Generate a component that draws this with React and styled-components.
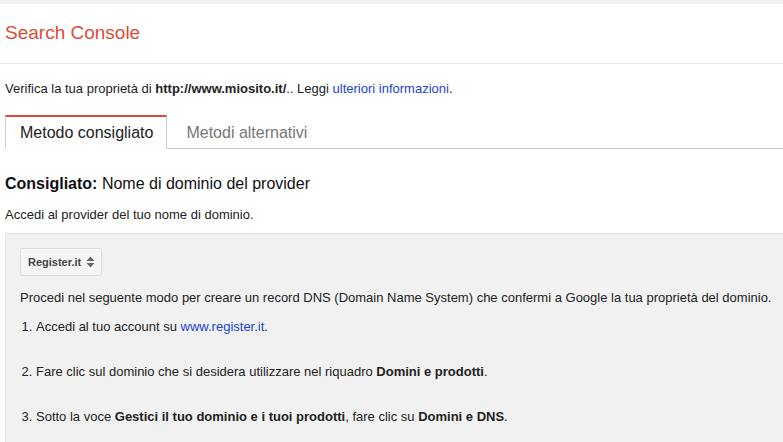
import React from "react";
import styled, { createGlobalStyle } from "styled-components";

const GlobalStyle = createGlobalStyle`
  html, body {
    margin: 0;
    padding: 0;
    background: #fff;
    font-family: "Liberation Sans", Arial, sans-serif;
    color: #222;
    overflow: hidden;
  }
`;

const TABS = ["Metodo consigliato", "Metodi alternativi"];

const Page = () => {
  return (
    <>
      <GlobalStyle />
      <TopStrip />
      <Header>
        <Title>Search Console</Title>
      </Header>
      <Content>
        <Verify>
          Verifica la tua proprietà di <b>http://www.miosito.it/</b>.. Leggi{" "}
          <Link href="#">ulteriori informazioni</Link>.
        </Verify>
        <TabBar>
          {TABS.map((t, i) => (
            <Tab key={t} active={i === 0}>
              {t}
            </Tab>
          ))}
          <TabFill />
        </TabBar>
        <Heading>
          <b>Consigliato:</b> Nome di dominio del provider
        </Heading>
        <Intro>Accedi al provider del tuo nome di dominio.</Intro>
        <Panel>
          <Select>
            Register.it
            <svg width="9" height="12" viewBox="0 0 9 12">
              <path d="M4.5 0.5 L8.5 5 L0.5 5 Z" fill="#666" />
              <path d="M4.5 11.5 L8.5 7 L0.5 7 Z" fill="#666" />
            </svg>
          </Select>
          <PanelText>
            Procedi nel seguente modo per creare un record DNS (Domain Name
            System) che confermi a Google la tua proprietà del dominio.
          </PanelText>
          <Steps>
            <li>
              Accedi al tuo account su <Link href="#">www.register.it</Link>.
            </li>
            <li>
              Fare clic sul dominio che si desidera utilizzare nel riquadro{" "}
              <b>Domini e prodotti</b>.
            </li>
            <li>
              Sotto la voce <b>Gestici il tuo dominio e i tuoi prodotti</b>,
              fare clic su <b>Domini e DNS</b>.
            </li>
          </Steps>
        </Panel>
      </Content>
    </>
  );
};

const TopStrip = styled.div`
  height: 4px;
  background: #f1f1f1;
`;

const Header = styled.div`
  height: 59px;
  display: flex;
  align-items: center;
  padding-left: 5px;
  border-bottom: 1px solid #e5e5e5;
`;

const Title = styled.div`
  color: #dd4b39;
  font-size: 19px;
  margin-top: -1px;
`;

const Content = styled.div`
  padding-left: 5px;
`;

const Verify = styled.div`
  font-size: 13px;
  line-height: 16px;
  margin-top: 17px;
`;

const Link = styled.a`
  color: #1a43d6;
  text-decoration: none;
`;

const TabBar = styled.div`
  display: flex;
  margin-top: 18px;
  height: 34px;
`;

const Tab = styled.div`
  box-sizing: border-box;
  display: flex;
  align-items: center;
  font-size: 16px;
  height: 34px;
  color: ${({ active }) => (active ? "#222" : "#777")};
  border-top: ${({ active }) => (active ? "2px solid #dd4b39" : "2px solid transparent")};
  border-left: ${({ active }) => (active ? "1px solid #ccc" : "none")};
  border-right: ${({ active }) => (active ? "1px solid #ccc" : "none")};
  border-bottom: ${({ active }) => (active ? "1px solid transparent" : "1px solid #ccc")};
  padding-left: ${({ active }) => (active ? "14px" : "19px")};
  padding-right: ${({ active }) => (active ? "13px" : "15px")};
`;

const TabFill = styled.div`
  flex: 1;
  border-bottom: 1px solid #ccc;
`;

const Heading = styled.div`
  font-size: 16px;
  line-height: 20px;
  margin-top: 25px;
  color: #111;
`;

const Intro = styled.div`
  font-size: 13px;
  line-height: 16px;
  margin-top: 13px;
`;

const Panel = styled.div`
  margin-top: 10px;
  background: #f1f1f1;
  border-top: 1px solid #e2e2e2;
  border-left: 1px solid #e5e5e5;
  padding: 14px 0 0 14px;
  height: 194px;
  overflow: hidden;
`;

const Select = styled.div`
  display: inline-flex;
  align-items: center;
  gap: 5px;
  box-sizing: border-box;
  height: 28px;
  padding: 0 6px 0 7px;
  border: 1px solid #dcdcdc;
  border-radius: 2px;
  background: #f5f5f5;
  font-size: 11px;
  font-weight: bold;
  color: #444;
`;

const PanelText = styled.div`
  font-size: 13px;
  line-height: 16px;
  margin-top: 14px;
  color: #222;
`;

const Steps = styled.ol`
  margin: 13px 0 0 0;
  padding-left: 16px;
  font-size: 13px;
  line-height: 16px;
  color: #222;

  li {
    margin-bottom: 29px;
  }

  li:last-child {
    margin-bottom: 0;
  }
`;

export default Page;
